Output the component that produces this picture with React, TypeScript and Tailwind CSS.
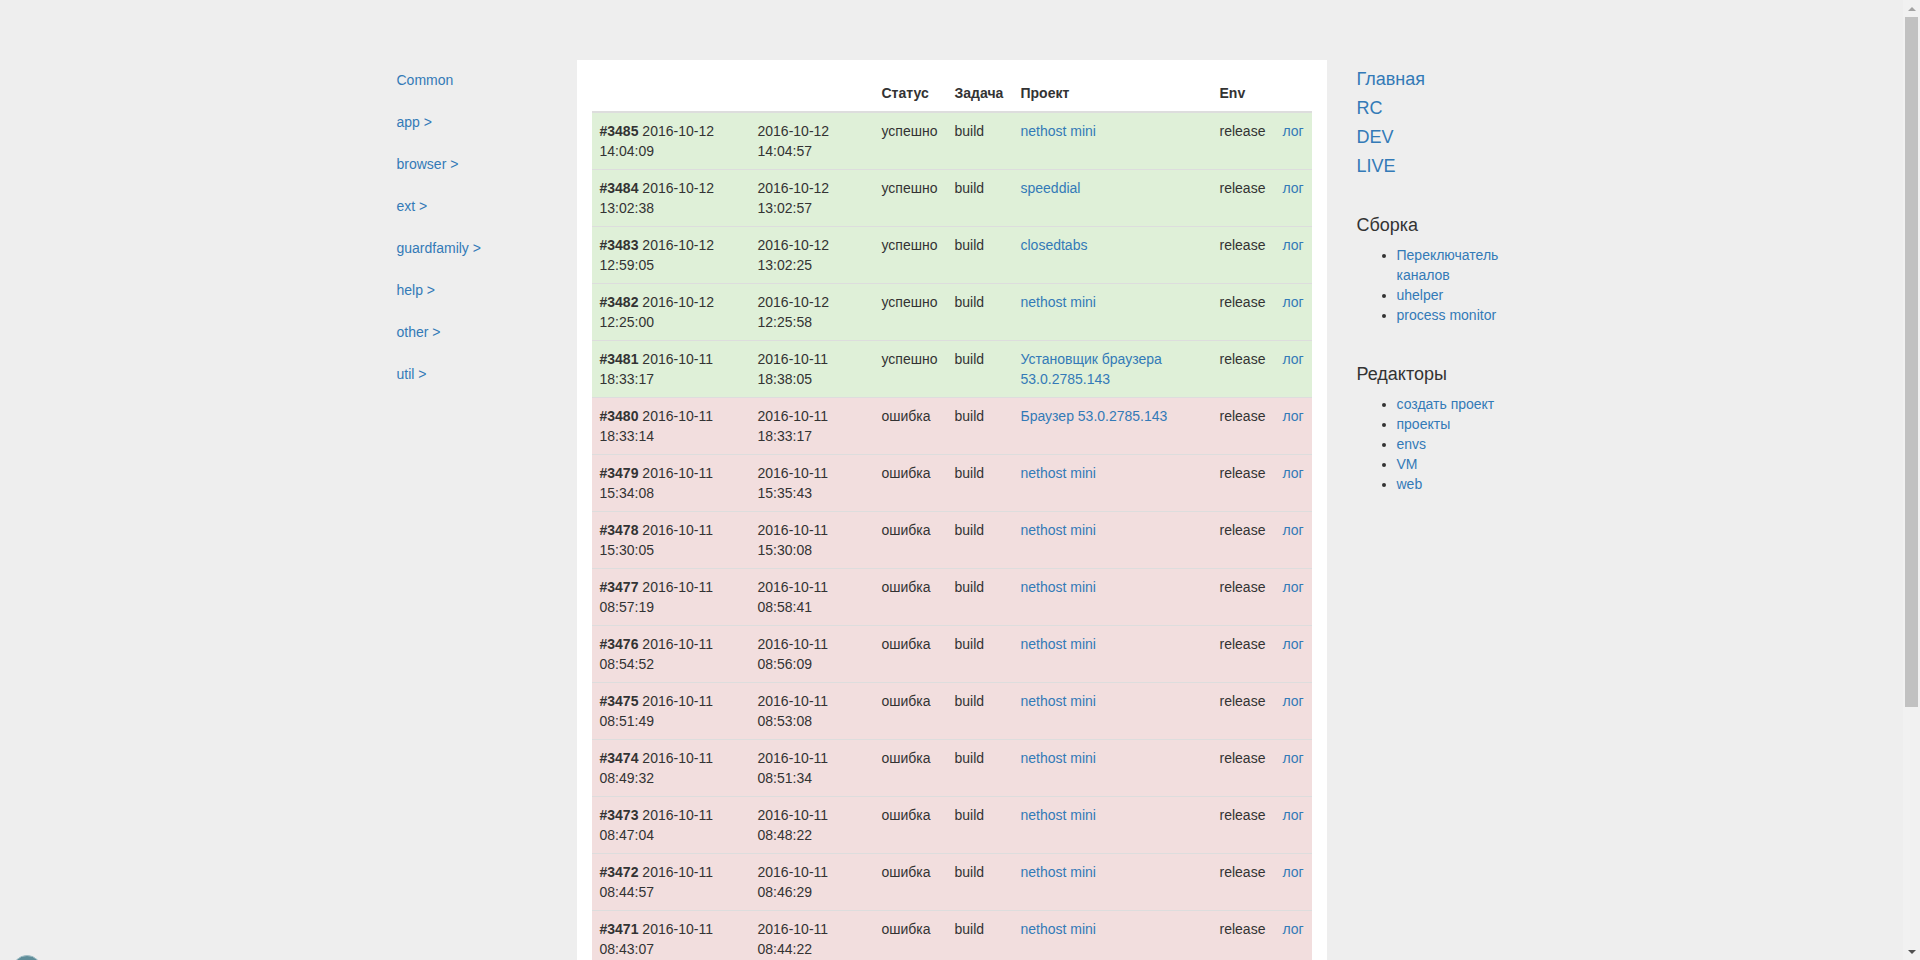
import React from 'react';

type Build = {
  id: number;
  started: [string, string];
  finished: [string, string];
  ok: boolean;
  project: string;
};

const builds: Build[] = [
  { id: 3485, started: ['2016-10-12', '14:04:09'], finished: ['2016-10-12', '14:04:57'], ok: true, project: 'nethost mini' },
  { id: 3484, started: ['2016-10-12', '13:02:38'], finished: ['2016-10-12', '13:02:57'], ok: true, project: 'speeddial' },
  { id: 3483, started: ['2016-10-12', '12:59:05'], finished: ['2016-10-12', '13:02:25'], ok: true, project: 'closedtabs' },
  { id: 3482, started: ['2016-10-12', '12:25:00'], finished: ['2016-10-12', '12:25:58'], ok: true, project: 'nethost mini' },
  { id: 3481, started: ['2016-10-11', '18:33:17'], finished: ['2016-10-11', '18:38:05'], ok: true, project: 'Установщик браузера 53.0.2785.143' },
  { id: 3480, started: ['2016-10-11', '18:33:14'], finished: ['2016-10-11', '18:33:17'], ok: false, project: 'Браузер 53.0.2785.143' },
  { id: 3479, started: ['2016-10-11', '15:34:08'], finished: ['2016-10-11', '15:35:43'], ok: false, project: 'nethost mini' },
  { id: 3478, started: ['2016-10-11', '15:30:05'], finished: ['2016-10-11', '15:30:08'], ok: false, project: 'nethost mini' },
  { id: 3477, started: ['2016-10-11', '08:57:19'], finished: ['2016-10-11', '08:58:41'], ok: false, project: 'nethost mini' },
  { id: 3476, started: ['2016-10-11', '08:54:52'], finished: ['2016-10-11', '08:56:09'], ok: false, project: 'nethost mini' },
  { id: 3475, started: ['2016-10-11', '08:51:49'], finished: ['2016-10-11', '08:53:08'], ok: false, project: 'nethost mini' },
  { id: 3474, started: ['2016-10-11', '08:49:32'], finished: ['2016-10-11', '08:51:34'], ok: false, project: 'nethost mini' },
  { id: 3473, started: ['2016-10-11', '08:47:04'], finished: ['2016-10-11', '08:48:22'], ok: false, project: 'nethost mini' },
  { id: 3472, started: ['2016-10-11', '08:44:57'], finished: ['2016-10-11', '08:46:29'], ok: false, project: 'nethost mini' },
  { id: 3471, started: ['2016-10-11', '08:43:07'], finished: ['2016-10-11', '08:44:22'], ok: false, project: 'nethost mini' },
  { id: 3470, started: ['2016-10-11', '08:40:12'], finished: ['2016-10-11', '08:41:30'], ok: false, project: 'nethost mini' },
];

const categories = ['Common', 'app >', 'browser >', 'ext >', 'guardfamily >', 'help >', 'other >', 'util >'];
const envLinks = ['Главная', 'RC', 'DEV', 'LIVE'];
const buildLinks = ['Переключатель каналов', 'uhelper', 'process monitor'];
const editorLinks = ['создать проект', 'проекты', 'envs', 'VM', 'web'];

function LinkList({ items }: { items: string[] }) {
  return (
    <ul className="list-disc pl-[40px] mt-[10px] text-[14px] leading-[20px] marker:text-[#333]">
      {items.map((item) => (
        <li key={item}>
          <a href="#" className="text-[#337ab7]">{item}</a>
        </li>
      ))}
    </ul>
  );
}

function Scrollbar() {
  return (
    <div className="w-[17px] h-full bg-[#f1f1f1] flex flex-col items-center">
      <div className="h-[17px] w-full flex items-center justify-center">
        <div className="w-0 h-0 border-l-[4px] border-r-[4px] border-b-[4px] border-l-transparent border-r-transparent border-b-[#a3a3a3]" />
      </div>
      <div className="w-[13px] h-[690px] bg-[#c1c1c1]" />
      <div className="flex-1" />
      <div className="h-[17px] w-full flex items-center justify-center">
        <div className="w-0 h-0 border-l-[4px] border-r-[4px] border-t-[4px] border-l-transparent border-r-transparent border-t-[#505050]" />
      </div>
    </div>
  );
}

export default function App() {
  return (
    <div className="h-screen w-full flex overflow-hidden bg-[#eeeeee] text-[#333] font-['Liberation_Sans',Arial,sans-serif] relative">
      <div className="flex-1 overflow-hidden">
        <div className="w-[1170px] mx-auto flex pt-[60px]">
          {/* left categories */}
          <div className="w-[195px] px-[15px]">
            <ul className="flex flex-col gap-[2px] text-[14px] leading-[20px]">
              {categories.map((c) => (
                <li key={c}>
                  <a href="#" className="block px-[15px] py-[10px] text-[#337ab7]">{c}</a>
                </li>
              ))}
            </ul>
          </div>

          {/* builds table */}
          <div className="w-[780px] px-[15px]">
            <div className="bg-white p-[15px]">
              <table className="w-full table-fixed border-collapse text-[14px] leading-[20px]">
                <colgroup>
                  <col className="w-[158px]" />
                  <col className="w-[124px]" />
                  <col className="w-[73px]" />
                  <col className="w-[66px]" />
                  <col className="w-[199px]" />
                  <col className="w-[63px]" />
                  <col className="w-[37px]" />
                </colgroup>
                <thead>
                  <tr>
                    <th className="p-[8px] text-left align-bottom font-bold border-b-2 border-[#ddd]"></th>
                    <th className="p-[8px] text-left align-bottom font-bold border-b-2 border-[#ddd]"></th>
                    <th className="p-[8px] text-left align-bottom font-bold border-b-2 border-[#ddd]">Статус</th>
                    <th className="p-[8px] text-left align-bottom font-bold border-b-2 border-[#ddd]">Задача</th>
                    <th className="p-[8px] text-left align-bottom font-bold border-b-2 border-[#ddd]">Проект</th>
                    <th className="p-[8px] text-left align-bottom font-bold border-b-2 border-[#ddd]">Env</th>
                    <th className="p-[8px] text-left align-bottom font-bold border-b-2 border-[#ddd]"></th>
                  </tr>
                </thead>
                <tbody>
                  {builds.map((b) => (
                    <tr key={b.id} className={b.ok ? 'bg-[#dff0d8]' : 'bg-[#f2dede]'}>
                      <td className="p-[8px] align-top border-t border-[#ddd]">
                        <b>#{b.id}</b> {b.started[0]}
                        <br />
                        {b.started[1]}
                      </td>
                      <td className="p-[8px] align-top border-t border-[#ddd]">
                        {b.finished[0]}
                        <br />
                        {b.finished[1]}
                      </td>
                      <td className="p-[8px] align-top border-t border-[#ddd]">{b.ok ? 'успешно' : 'ошибка'}</td>
                      <td className="p-[8px] align-top border-t border-[#ddd]">build</td>
                      <td className="p-[8px] align-top border-t border-[#ddd]">
                        <a href="#" className="text-[#337ab7]">{b.project}</a>
                      </td>
                      <td className="p-[8px] align-top border-t border-[#ddd]">release</td>
                      <td className="p-[8px] align-top border-t border-[#ddd]">
                        <a href="#" className="text-[#337ab7]">лог</a>
                      </td>
                    </tr>
                  ))}
                </tbody>
              </table>
            </div>
          </div>

          {/* right menu */}
          <div className="w-[195px] px-[15px]">
            <div className="flex flex-col gap-[9px] mt-[9px] text-[18px] leading-[20px]">
              {envLinks.map((l) => (
                <a key={l} href="#" className="text-[#337ab7]">{l}</a>
              ))}
            </div>
            <h4 className="mt-[39px] text-[18px] leading-[20px] text-[#333]">Сборка</h4>
            <LinkList items={buildLinks} />
            <h4 className="mt-[39px] text-[18px] leading-[20px] text-[#333]">Редакторы</h4>
            <LinkList items={editorLinks} />
          </div>
        </div>
      </div>
      <Scrollbar />
      <div className="absolute left-[12px] top-[955px] w-[30px] h-[30px] rounded-full bg-[#5f8d99] border border-[#9fbcc4]" />
    </div>
  );
}
